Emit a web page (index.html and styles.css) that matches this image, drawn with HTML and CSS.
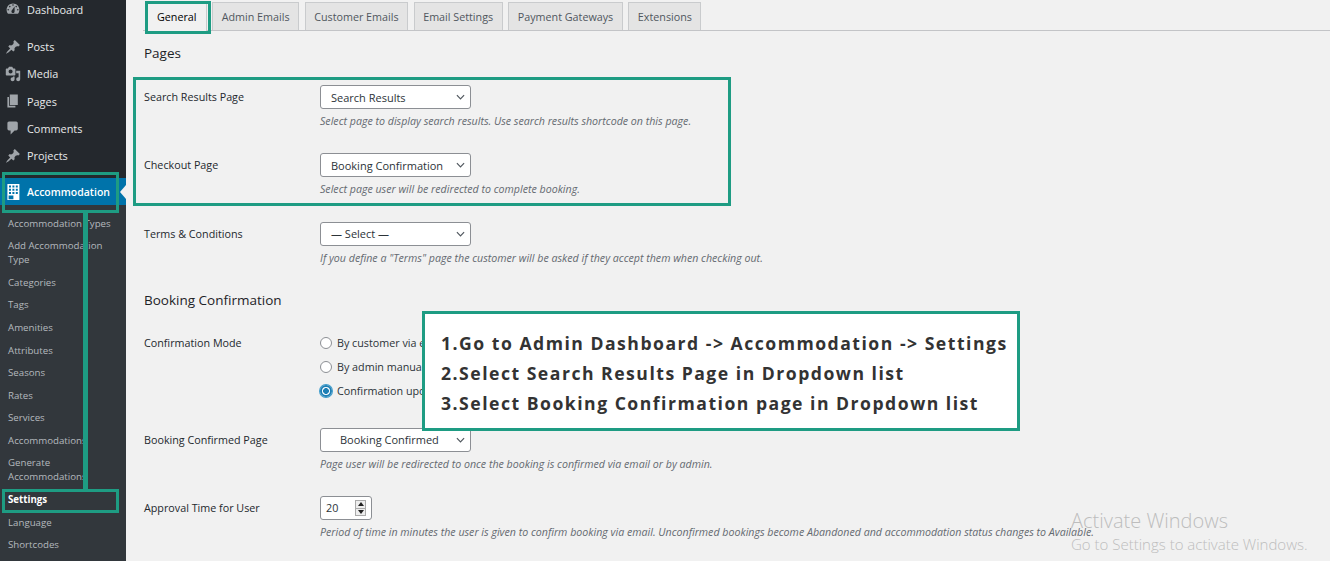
FILE: index.html
```html
<!DOCTYPE html>
<html lang="en">
<head>
<meta charset="utf-8">
<title>Accommodation Settings</title>
<link rel="stylesheet" href="styles.css">
</head>
<body>
<div class="page">
  <aside class="sidebar">
    <ul class="menu">
      <li class="menu-item gap-after"><svg class="icon" viewBox="0 0 20 20"><path fill-rule="evenodd" d="M3.76 16h12.48c1.1-1.37 1.76-3.11 1.76-5 0-4.42-3.58-8-8-8s-8 3.58-8 8c0 1.89.66 3.63 1.76 5zM10 4c.55 0 1 .45 1 1s-.45 1-1 1-1-.45-1-1 .45-1 1-1zM6 6c.55 0 1 .45 1 1s-.45 1-1 1-1-.45-1-1 .45-1 1-1zm8 0c.55 0 1 .45 1 1s-.45 1-1 1-1-.45-1-1 .45-1 1-1zm-5.37 5.55L12 7v6c0 1.1-.9 2-2 2s-2-.9-2-2c0-.57.24-1.08.63-1.45zM4 10c.55 0 1 .45 1 1s-.45 1-1 1-1-.45-1-1 .45-1 1-1zm12 0c.55 0 1 .45 1 1s-.45 1-1 1-1-.45-1-1 .45-1 1-1z"/></svg>Dashboard</li>
      <li class="menu-item"><svg class="icon" viewBox="0 0 20 20"><path d="M10.44 3.02l1.82-1.82 6.36 6.35-1.83 1.82c-1.05-.68-2.48-.57-3.41.36l-.75.75c-.92.93-1.04 2.35-.35 3.41l-1.83 1.82-2.41-2.41-2.8 2.79c-.42.42-3.38 2.71-3.8 2.29s1.86-3.39 2.28-3.81l2.79-2.79L4.1 9.36l1.83-1.82c1.05.69 2.48.57 3.4-.36l.75-.75c.93-.92 1.05-2.35.36-3.41z"/></svg>Posts</li>
      <li class="menu-item"><svg class="icon" viewBox="0 0 20 20"><path fill-rule="evenodd" d="M13 11V4c0-.55-.45-1-1-1h-1.67L9 1H5L3.67 3H2c-.55 0-1 .45-1 1v7c0 .55.45 1 1 1h10c.55 0 1-.45 1-1zM7 4.5c1.38 0 2.5 1.12 2.5 2.5S8.38 9.5 7 9.5 4.5 8.38 4.5 7 5.62 4.5 7 4.5zM14 6h5v10.5c0 1.38-1.12 2.5-2.5 2.5S14 17.88 14 16.5s1.12-2.5 2.5-2.5c.17 0 .34.02.5.05V9h-3V6zm-4 8.05V13h2v3.5c0 1.38-1.12 2.5-2.5 2.5S7 17.88 7 16.5 8.12 14 9.5 14c.17 0 .34.02.5.05z"/></svg>Media</li>
      <li class="menu-item"><svg class="icon" viewBox="0 0 20 20"><path d="M6 15V2h10v13H6zm-1 1h8v2H3V5h2v11z"/></svg>Pages</li>
      <li class="menu-item"><svg class="icon" viewBox="0 0 20 20"><path d="M5 2h9c1.1 0 2 .9 2 2v7c0 1.1-.9 2-2 2h-2l-5 5v-5H5c-1.1 0-2-.9-2-2V4c0-1.1.9-2 2-2z"/></svg>Comments</li>
      <li class="menu-item"><svg class="icon" viewBox="0 0 20 20"><path d="M10.44 3.02l1.82-1.82 6.36 6.35-1.83 1.82c-1.05-.68-2.48-.57-3.41.36l-.75.75c-.92.93-1.04 2.35-.35 3.41l-1.83 1.82-2.41-2.41-2.8 2.79c-.42.42-3.38 2.71-3.8 2.29s1.86-3.39 2.28-3.81l2.79-2.79L4.1 9.36l1.83-1.82c1.05.69 2.48.57 3.4-.36l.75-.75c.93-.92 1.05-2.35.36-3.41z"/></svg>Projects</li>
      <li class="menu-item current"><svg class="icon" viewBox="0 0 20 20"><path fill="#fff" fill-rule="evenodd" d="M3 0h15v20H3zM5 2v2.500h2.500V2zm4.250 0v2.500h2.500V2zm4.250 0v2.500H16V2zM5 6v2.500h2.500V6zm4.250 0v2.500h2.500V6zm4.250 0v2.500H16V6zM5 10v2.500h2.500V10zm4.250 0v2.500h2.500V10zm4.250 0v2.500H16V10zM4.500 14.500V19h6v-4.500z"/></svg>Accommodation</li>
    </ul>
    <ul class="submenu">
      <li>Accommodation Types</li>
      <li>Add Accommodation Type</li>
      <li>Categories</li>
      <li>Tags</li>
      <li>Amenities</li>
      <li>Attributes</li>
      <li>Seasons</li>
      <li>Rates</li>
      <li>Services</li>
      <li>Accommodations</li>
      <li>Generate Accommodations</li>
      <li class="active">Settings</li>
      <li>Language</li>
      <li>Shortcodes</li>
    </ul>
  </aside>

  <main class="content">
    <nav class="tabs">
      <span class="tab active">General</span>
      <span class="tab">Admin Emails</span>
      <span class="tab">Customer Emails</span>
      <span class="tab">Email Settings</span>
      <span class="tab">Payment Gateways</span>
      <span class="tab">Extensions</span>
    </nav>

    <h2 class="heading first">Pages</h2>
    <div class="row">
      <div class="label">Search Results Page</div>
      <div class="field">
        <div class="select"><span>Search Results</span><svg class="chevron" viewBox="0 0 10 6"><path d="M1 1l4 4 4-4"/></svg></div>
        <p class="desc">Select page to display search results. Use search results shortcode on this page.</p>
      </div>
    </div>
    <div class="row">
      <div class="label">Checkout Page</div>
      <div class="field">
        <div class="select"><span>Booking Confirmation</span><svg class="chevron" viewBox="0 0 10 6"><path d="M1 1l4 4 4-4"/></svg></div>
        <p class="desc">Select page user will be redirected to complete booking.</p>
      </div>
    </div>
    <div class="row">
      <div class="label">Terms &amp; Conditions</div>
      <div class="field">
        <div class="select"><span>— Select —</span><svg class="chevron" viewBox="0 0 10 6"><path d="M1 1l4 4 4-4"/></svg></div>
        <p class="desc">If you define a "Terms" page the customer will be asked if they accept them when checking out.</p>
      </div>
    </div>

    <h2 class="heading second">Booking Confirmation</h2>
    <div class="row radios-row">
      <div class="label radio-label">Confirmation Mode</div>
      <div class="field">
        <div class="radio"><i class="dot"></i>By customer via email</div>
        <div class="radio"><i class="dot"></i>By admin manually</div>
        <div class="radio"><i class="dot checked"></i>Confirmation upon payment</div>
      </div>
    </div>
    <div class="row">
      <div class="label">Booking Confirmed Page</div>
      <div class="field">
        <div class="select indented"><span>Booking Confirmed</span><svg class="chevron" viewBox="0 0 10 6"><path d="M1 1l4 4 4-4"/></svg></div>
        <p class="desc">Page user will be redirected to once the booking is confirmed via email or by admin.</p>
      </div>
    </div>
    <div class="row">
      <div class="label">Approval Time for User</div>
      <div class="field">
        <div class="number"><span>20</span><span class="spinner"><i class="up"></i><i class="down"></i></span></div>
        <p class="desc">Period of time in minutes the user is given to confirm booking via email. Unconfirmed bookings become Abandoned and accommodation status changes to Available.</p>
      </div>
    </div>
  </main>

  <div class="mark mark-tab"></div>
  <div class="mark mark-pages"></div>
  <div class="mark mark-menu"></div>
  <div class="mark-bar"></div>
  <div class="mark mark-settings"></div>
  <span class="arrow"></span>

  <div class="callout">
    <p>1.Go to Admin Dashboard -&gt; Accommodation -&gt; Settings</p>
    <p>2.Select Search Results Page in Dropdown list</p>
    <p>3.Select Booking Confirmation page in Dropdown list</p>
  </div>

  <div class="watermark">
    <div class="wm-title">Activate Windows</div>
    <div class="wm-sub">Go to Settings to activate Windows.</div>
  </div>
</div>
</body>
</html>
```

FILE: styles.css
```css
* { box-sizing: border-box; }
html, body { margin: 0; height: 100%; }
body { background: #f1f1f1; font-family: "Open Sans", "Noto Sans", sans-serif; overflow: hidden; }
.page { position: relative; display: flex; width: 1330px; height: 561px; overflow: hidden; }

.sidebar { flex: 0 0 126px; background: #24282d; color: #eee; font-size: 10.9px; }
.menu { list-style: none; margin: -4.500px 0 0; padding: 0; }
.menu-item { display: flex; align-items: center; height: 27.25px; padding-left: 5px; color: #e8eaeb; }
.menu-item.gap-after { margin-bottom: 10.2px; }
.icon { width: 16px; height: 16px; margin-right: 6px; fill: #a0a5aa; flex: none; }
.menu-item.current { margin-top: 8.8px; padding-left: 5px; background: #0073aa; color: #fff; font-size: 10.5px; font-weight: 600; }
.submenu { list-style: none; margin: 0; padding: 7px 0 0; height: 400px; background: #32373c; font-size: 9.700px; color: #b4b9be; }
.submenu li { padding: 4.3px 4px 4.3px 8px; line-height: 14px; }
.submenu .active { color: #fff; font-weight: 700; }

.content { flex: 1; padding: 2px 0 0 18px; color: #23282d; font-size: 10.75px; }
.tabs { display: flex; gap: 5.6px; height: 29px; padding-left: 3px; margin-left: -1px; border-bottom: 1px solid #c3c4c7; }
.tab { height: 28px; padding: 0 8.5px; display: flex; align-items: center; background: #e4e4e4; border: 1px solid #c9cbcd; border-bottom: 0; color: #50575e; font-weight: 500; }
.tab.active { height: 29px; padding: 0 9px 0 10px; background: #f1f1f1; border-color: #c9cbcd; color: #000; }

.heading { margin: 0; font-size: 13.500px; line-height: 20px; font-weight: 500; color: #1d2327; }
.heading.first { margin: 12px 0 22px; }
.heading.second { margin: 0 0 21px; padding-top: 0; }

.row { display: flex; margin-bottom: 24.3px; }
.row.radios-row { margin-bottom: 25px; }
.label { flex: 0 0 176px; padding-top: 4px; line-height: 16px; }
.radio-label { padding-top: 4px; }
.field { flex: 1; min-width: 0; }
.select { display: flex; align-items: center; justify-content: space-between; width: 151px; height: 24px; padding: 0 5px 0 10px; background: #fff; border: 1px solid #8c8f94; border-radius: 3px; white-space: nowrap; font-size: 11px; color: #2c3338; }
.select.indented { padding-left: 19px; }
.chevron { width: 9px; height: 6px; fill: none; stroke: #50575e; stroke-width: 1.3; flex: none; }
.desc { margin: 4px 0 0; height: 16px; line-height: 16px; font-size: 10.65px; font-style: italic; color: #646970; white-space: nowrap; }

.radio { display: flex; align-items: center; height: 24px; white-space: nowrap; color: #2c3338; }
.dot { width: 12px; height: 12px; margin-right: 5px; border: 1px solid #8c8f94; border-radius: 50%; background: #fff; flex: none; }
.dot.checked { border: 2px solid #1e7fb5; box-shadow: 0 0 0 1px #3d9ccc; background: radial-gradient(circle, #1e7fb5 0 2.6px, #fff 3.2px); }

.number { display: flex; align-items: center; justify-content: space-between; width: 52px; height: 24px; padding: 0 5px; background: #fff; border: 1px solid #8c8f94; border-radius: 3px; color: #2c3338; }
.spinner { display: flex; flex-direction: column; width: 11px; height: 16px; border: 1px solid #aaa; background: #eee; }
.spinner i { flex: 1; position: relative; display: flex; align-items: center; justify-content: center; }
.spinner .up::before { content: ""; border: 3px solid transparent; border-top: 0; border-bottom: 4px solid #222; }
.spinner .down { border-top: 1px solid #aaa; }
.spinner .down::before { content: ""; border: 3px solid transparent; border-bottom: 0; border-top: 4px solid #222; }

.mark { position: absolute; border: 3px solid #1e9c83; }
.mark-tab { left: 145px; top: 1px; width: 66px; height: 33px; }
.mark-pages { left: 133px; top: 77px; width: 598px; height: 129px; }
.mark-menu { left: 2px; top: 172px; width: 117px; height: 41px; }
.mark-settings { left: 2px; top: 489px; width: 117px; height: 24px; }
.mark-bar { position: absolute; left: 83px; top: 212px; width: 5px; height: 279px; background: #1e9c83; }
.arrow { position: absolute; left: 120px; top: 185px; border: 7px solid transparent; border-left: 0; border-right: 6px solid #f1f1f1; }

.callout { position: absolute; left: 422px; top: 311px; width: 598px; height: 120px; padding: 14px 0 0 16px; background: #fff; border: 3px solid #1e9c83; font-size: 17.6px; font-weight: 700; letter-spacing: 1.5px; line-height: 30px; color: #333; white-space: nowrap; }
.callout p { margin: 0; }

.watermark { position: absolute; left: 1071px; top: 508px; color: #bdbdbd; font-weight: 300; white-space: nowrap; }
.wm-title { font-size: 20px; line-height: 26px; }
.wm-sub { font-size: 15px; line-height: 20px; }
```
